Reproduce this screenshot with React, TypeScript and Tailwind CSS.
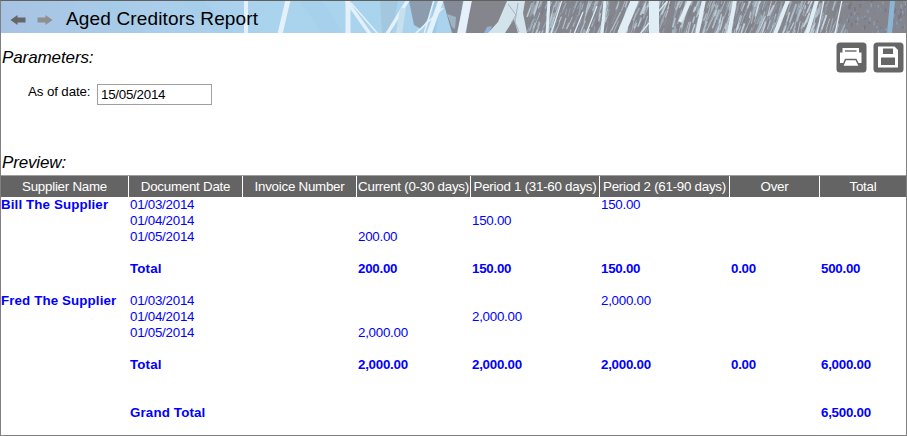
import React from "react";

const rand = (seed: number) => {
  let s = seed;
  return () => {
    s = (s * 16807) % 2147483647;
    return s / 2147483647;
  };
};

const r = rand(71);
const tones = ["#d3e3ec", "#b5c8d4", "#8b98a6", "#a9bac6", "#c0d3df", "#7b7e8a", "#9fb2bf"];
const strands = Array.from({ length: 620 }, (_, i) => {
  const x = 532 + r() * 314;
  const y = r() * 44 - 12;
  const len = 5 + r() * 14;
  return { x, y, dx: len * (0.2 + r() * 0.3), len, w: 0.6 + r() * 1.2, c: tones[i % 7] };
});
const flecks = Array.from({ length: 80 }, (_, i) => ({
  x: 842 + r() * 64,
  y: r() * 34,
  h: 1 + r() * 4,
  c: ["#8a9db0", "#7b90a8", "#747783"][i % 3],
}));

function Banner() {
  return (
    <svg className="absolute inset-0 h-full w-full" viewBox="1 1 905 32" preserveAspectRatio="none" aria-hidden="true">
      <defs>
        <linearGradient id="sky" x1="0" x2="1">
          <stop offset="0" stopColor="#a7c3e3" />
          <stop offset="0.12" stopColor="#a9cbe9" />
          <stop offset="0.3" stopColor="#aad3ee" />
          <stop offset="1" stopColor="#a7d1ed" />
        </linearGradient>
      </defs>
      <rect width="907" height="34" fill="url(#sky)" />
      <g fill="#a0cae8" opacity="0.35">
        <path d="M90 1h35l20 32h-25zM180 1h24l30 32h-18zM300 1h22l20 32h-20z" />
      </g>
      <path d="M380 1h18l-6 32h-10z" fill="#a3c7df" />
      <path d="M409 1h24l-4 16-8 12-7-4z" fill="#8d9cad" />
      <path d="M434 1h6l-4 32h-6z" fill="#9ccbe9" />
      <path d="M443 1h20l-5 32h-6z" fill="#858b96" />
      <path d="M447 14l9 3-1 12-3-2z" fill="#9eb4c5" />
      <path d="M471 1H907V33H466z" fill="#85858d" />
      <g stroke="#e5f1fa" fill="none">
        <path d="M246 0V34" strokeWidth="4" />
        <path d="M288 0L280 34M348 0V34" strokeWidth="5" />
        <path d="M346 0L370 34M408 0L387 34" strokeWidth="3.5" />
        <path d="M351 3L378 34M434 0L424 34" strokeWidth="1.5" />
        <path d="M403 8L399 34" stroke="#c8dfee" strokeWidth="6" />
        <path d="M441 0L429 34" strokeWidth="5" />
        <path d="M443 8L415 34" strokeWidth="1.6" />
        <path d="M468 0L461 34" strokeWidth="8" />
      </g>
      <path d="M484 33l3-6 5-1-3 7z" fill="#8fb3da" />
      <path d="M507 1h18l-2 12 4 20h-9l-4-14-9 14h-17l10-11z" fill="#d3e3eb" />
      <path d="M508 4l8 11-5 8M518 3l-3 19 4 10" stroke="#a4b5c2" fill="none" />
      {strands.map((s, i) => (
        <path key={i} d={`M${s.x} ${s.y}l${-s.dx} ${s.len}`} stroke={s.c} strokeWidth={s.w} opacity="0.75" />
      ))}
      <g stroke="#e0edf4" strokeWidth="3" fill="none">
        <path d="M549 0L547 34M605 0L602 34" />
        <path d="M635 0L621 34" strokeWidth="8" />
        <path d="M654 0V34" strokeWidth="10" />
        <path d="M690 0L680 22M704 0L697 34M735 0L729 34M788 0L775 34M817 0L807 34" strokeWidth="4" />
        <path d="M562 0L551 34M583 12L574 34M597 6L586 34M668 0L640 34M824 0L817 34M842 0L835 34" strokeWidth="1.3" />
      </g>
      {flecks.map((f, i) => (
        <rect key={i} x={f.x} y={f.y} width="1.5" height={f.h} fill={f.c} />
      ))}
      <path d="M890 1h5l-3 32h-5z" fill="#8cb4d5" />
    </svg>
  );
}

function PrintIcon() {
  return (
    <svg width="31" height="31" viewBox="0 0 31 31" aria-label="Print">
      <rect x="0.5" y="0.5" width="30" height="30" rx="3.5" fill="#666" />
      <path d="M6.5 6H23v4.5h2.5V21H4V10.5h2.5z" fill="#fff" />
      <path d="M9 9h11.5" stroke="#666" strokeWidth="1.4" />
      <path d="M9.5 17.5h10.5l3.5 7h-17z" fill="#fff" stroke="#666" strokeWidth="1.5" />
    </svg>
  );
}

function SaveIcon() {
  return (
    <svg width="31" height="31" viewBox="0 0 31 31" aria-label="Save">
      <rect x="0.5" y="0.5" width="30" height="30" rx="3.5" fill="#666" />
      <path d="M5 4.5h16.5L25 8v17.5H5z" fill="#fff" />
      <path d="M10 6.5h10v5.5H10zM8 15.5h14v7.5H8z" fill="#666" />
    </svg>
  );
}

const grid = "grid grid-cols-[128px_114px_114px_114px_129px_130px_90px_86px]";
const headers = ["Supplier Name", "Document Date", "Invoice Number", "Current (0-30 days)", "Period 1 (31-60 days)", "Period 2 (61-90 days)", "Over", "Total"];

type Row = { cells: string[]; bold?: boolean };
const e: Row = { cells: [] };
const rows: Row[] = [
  { cells: ["Bill The Supplier", "01/03/2014", "", "", "", "150.00"] },
  { cells: ["", "01/04/2014", "", "", "150.00"] },
  { cells: ["", "01/05/2014", "", "200.00"] },
  e,
  { cells: ["", "Total", "", "200.00", "150.00", "150.00", "0.00", "500.00"], bold: true },
  e,
  { cells: ["Fred The Supplier", "01/03/2014", "", "", "", "2,000.00"] },
  { cells: ["", "01/04/2014", "", "", "2,000.00"] },
  { cells: ["", "01/05/2014", "", "2,000.00"] },
  e,
  { cells: ["", "Total", "", "2,000.00", "2,000.00", "2,000.00", "0.00", "6,000.00"], bold: true },
  e,
  e,
  { cells: ["", "Grand Total", "", "", "", "", "", "6,500.00"], bold: true },
];

function cellStyle(column: number, bold?: boolean) {
  if (column === 0) return "font-bold tracking-[0.12px]";
  if (column === 1 && bold) return "pl-px font-bold tracking-[0.15px]";
  if (bold) return "pl-px font-bold tracking-[-0.25px]";
  return "pl-px";
}

export default function App() {
  return (
    <div className="flex h-[436px] w-[907px] flex-col overflow-hidden border border-[#808080] border-t-[#606060] bg-white font-['Liberation_Sans',Arial,sans-serif] text-[13.333px] tracking-[-0.25px] text-black">
      <header className="relative flex h-8 shrink-0 items-center overflow-hidden">
        <Banner />
        <svg className="relative mt-[6px] ml-[9px]" width="44" height="14" viewBox="0 0 44 14" aria-hidden="true">
          <path d="M0.5 7L7.5 2v2.5h8v5h-8V12z" fill="#666" />
          <path d="M42.5 7L35.5 2v2.5h-8v5h8V12z" fill="#8f8f8f" />
        </svg>
        <h1 className="relative mt-[3px] ml-[12px] whitespace-nowrap text-[19px] leading-6 tracking-[0.15px]">Aged Creditors Report</h1>
      </header>
      <section className="h-[142px] shrink-0 pl-px">
        <div className="flex h-[51px] items-start justify-between">
          <h2 className="pt-[15px] text-[17px] leading-5 tracking-[-0.1px] italic">Parameters:</h2>
          <div className="flex gap-1.5 pt-[9px] pr-[2px]">
            <PrintIcon />
            <SaveIcon />
          </div>
        </div>
        <div className="flex h-[69px] items-start pl-[26px]">
          <label className="w-[69px] whitespace-nowrap leading-4 tracking-[-0.12px]">As of date:</label>
          <div className="h-[21px] w-[115px] border border-[#a0a0a0] pl-[3px] leading-5">15/05/2014</div>
        </div>
        <h2 className="text-[17px] leading-5 tracking-[-0.15px] italic">Preview:</h2>
      </section>
      <section className="flex flex-col">
        <div className={grid + " h-[22px] border-t border-[#a0a0a0] bg-[#646464] text-white"}>
          {headers.map((h, i) => (
            <div key={h} className={"flex items-center justify-center whitespace-nowrap " + (i < 7 ? "border-r border-white" : "")}>{h}</div>
          ))}
        </div>
        {rows.map((row, i) => (
          <div key={i} className={grid + " h-4 leading-4 text-[#0000ff]"}>
            {row.cells.map((c, j) => (
              <div key={j} className={"whitespace-nowrap " + cellStyle(j, row.bold)}>{c}</div>
            ))}
          </div>
        ))}
      </section>
    </div>
  );
}
